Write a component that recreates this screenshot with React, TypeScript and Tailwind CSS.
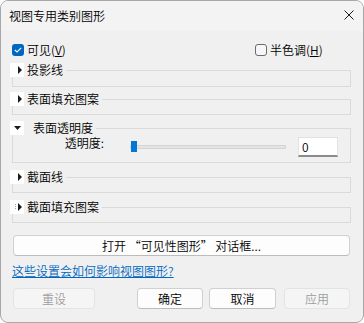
import React from "react";

type GroupProps = {
  title: string;
  expanded?: boolean;
  mixed?: boolean;
  textIndent?: string;
  bodyClass: string;
  className?: string;
  children?: React.ReactNode;
};

function Toggle({ expanded, mixed }: { expanded?: boolean; mixed?: boolean }) {
  return (
    <div className="w-[14px] h-[14px] bg-white flex items-center justify-center shrink-0">
      {expanded ? (
        <svg width="7" height="4" viewBox="0 0 7 4">
          <path d="M0 0 H7 L3.5 4 Z" fill="#1b1b1b" />
        </svg>
      ) : (
        <svg width="8" height="8" viewBox="0 0 8 8" className="ml-[3px]">
          {mixed && <path d="M0 1 V7" stroke="#555" strokeWidth="1" strokeDasharray="1 1" />}
          <path d="M3 0 L7 4 L3 8 Z" fill="#1b1b1b" />
        </svg>
      )}
    </div>
  );
}

function Group({ title, expanded, mixed, textIndent = "pl-[3px]", bodyClass, className = "", children }: GroupProps) {
  return (
    <div className={`ml-[9px] mr-[12px] flex flex-col ${className}`}>
      <div className="flex h-[14px]">
        <Toggle expanded={expanded} mixed={mixed} />
        <span className={`${textIndent} pr-[3px] leading-[14px] whitespace-nowrap`}>{title}</span>
        <div className="flex-1 mt-[7px] border-t border-r border-[#dadada]" />
      </div>
      <div className={`ml-[2px] border-l border-r border-b border-[#dadada] ${bodyClass}`}>{children}</div>
    </div>
  );
}

function Btn({ label, disabled, className = "" }: { label: string; disabled?: boolean; className?: string }) {
  return (
    <div
      className={`h-[21px] rounded-[4px] border flex items-center justify-center leading-none ${
        disabled
          ? "bg-[#f5f5f5] border-[#e3e3e3] text-[#9d9d9d]"
          : "bg-[#fdfdfd] border-[#d0d0d0] border-b-[#bcbcbc] text-black"
      } ${className}`}
    >
      {label}
    </div>
  );
}

export default function App() {
  return (
    <div
      className="w-[364px] h-[323px] bg-[#f0f0f0] border border-[#a8a8a8] rounded-[8px] overflow-hidden flex flex-col text-[12px] font-[350] text-black"
      style={{ fontFamily: '"Noto Sans CJK SC", "Noto Sans", sans-serif' }}
    >
      {/* 标题栏 */}
      <div className="h-[30px] bg-[#f3f3f3] flex items-start justify-between pl-[8px] pr-[9px] shrink-0">
        <span className="mt-[8px] leading-[14px]">视图专用类别图形</span>
        <svg width="10" height="10" viewBox="0 0 10 10" className="mt-[9px]">
          <path d="M0.5 0.5 L9.5 9.5 M9.5 0.5 L0.5 9.5" stroke="#1b1b1b" strokeWidth="1" />
        </svg>
      </div>

      {/* 可见 / 半色调 */}
      <div className="flex items-center h-[12px] mt-[13px] pl-[11px]">
        <div className="flex-1 flex items-center">
          <div className="w-[12px] h-[12px] rounded-[3px] bg-[#0067c0] flex items-center justify-center">
            <svg width="8" height="6" viewBox="0 0 8 6">
              <path d="M0.8 3 L3 5 L7.2 0.8" stroke="white" strokeWidth="1.1" fill="none" />
            </svg>
          </div>
          <span className="ml-[3px] leading-[14px]">
            可见(<u>V</u>)
          </span>
        </div>
        <div className="w-[108px] shrink-0 flex items-center">
          <div className="w-[12px] h-[12px] rounded-[3px] border border-[#6b6b6b] bg-[#f7f7f7]" />
          <span className="ml-[3px] leading-[14px]">
            半色调(<u>H</u>)
          </span>
        </div>
      </div>

      <Group title="投影线" className="mt-[7px]" bodyClass="h-[10px]" />
      <Group title="表面填充图案" className="mt-[5px]" bodyClass="h-[9px]" />
      <Group title="表面透明度" expanded textIndent="pl-[9px]" className="mt-[6px]" bodyClass="h-[28px] flex items-start">
        <span className="w-[91px] text-right mt-[1px] leading-[14px]">透明度:</span>
        <div className="relative w-[156px] h-[11px] ml-[26px] mt-[6px]">
          <div className="absolute left-0 right-0 top-[4px] h-[4px] bg-[#e4e4e4] border border-[#d4d4d4]" />
          <div className="absolute left-[1px] top-0 w-[6px] h-[11px] bg-[#0078d4]" />
        </div>
        <div className="ml-[12px] mt-[2px] w-[40px] h-[20px] bg-white border border-[#e2e2e2] border-b-[#8a8a8a] border-b-2 pl-[3px] leading-[17px]">
          0
        </div>
      </Group>
      <Group title="截面线" className="mt-[7px]" bodyClass="h-[9px]" />
      <Group title="截面填充图案" mixed className="mt-[7px]" bodyClass="h-[9px]" />

      <Btn label="打开 “可见性图形” 对话框..." className="ml-[12px] mr-[13px] mt-[12px]" />

      <a className="ml-[11px] mt-[7px] leading-[16px] text-[#0067c0] underline self-start">
        这些设置会如何影响视图图形?
      </a>

      <div className="flex mt-[9px] ml-[12px]">
        <Btn label="重设" disabled className="w-[82px]" />
        <Btn label="确定" className="w-[66px] ml-[42px]" />
        <Btn label="取消" className="w-[67px] ml-[6px]" />
        <Btn label="应用" disabled className="w-[66px] ml-[8px]" />
      </div>
    </div>
  );
}
